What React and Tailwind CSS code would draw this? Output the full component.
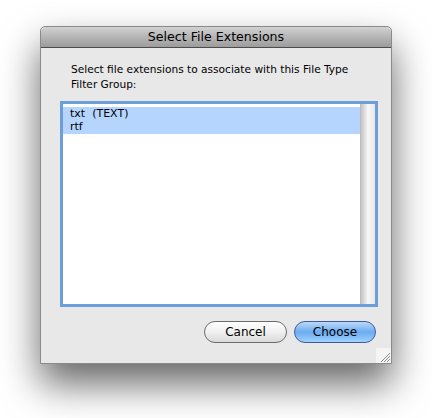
import React from "react";

export default function App() {
  const font = { fontFamily: '"Lucida Grande", "DejaVu Sans", sans-serif' };
  return (
    <div className="w-[432px] h-[418px] bg-white pl-[40px] pt-[26px]" style={font}>
      <div className="relative w-[352px] h-[338px] bg-[#e8e8e8] border border-[#8a8a8a] rounded-t-[5px] shadow-[0_20px_38px_rgba(0,0,0,0.6)] flex flex-col">
        <div className="h-[21px] rounded-t-[5px] bg-gradient-to-b from-[#d2d2d2] via-[#b5b5b5] to-[#9c9c9c] border-b border-[#4c4c4c] flex items-center justify-center text-[12.6px] text-black">
          Select File Extensions
        </div>
        <div className="pl-[30px] pt-[14px] pr-[20px] text-[10.6px] leading-[15px] text-black">
          Select file extensions to associate with this File Type Filter Group:
        </div>
        <div className="ml-[19px] mt-[9px] w-[318px] h-[206px] border-[3px] border-[#6a9fd9] bg-white flex">
          <div className="flex-1 pt-[3px] text-[11px] leading-[13px] text-black">
            <div className="bg-[#b5d5ff] pl-[7px]">txt&nbsp;&nbsp;(TEXT)</div>
            <div className="bg-[#b5d5ff] pl-[7px] h-[14px]">rtf</div>
          </div>
          <div className="w-[15px] bg-gradient-to-r from-[#c4c4c4] via-[#f7f7f7] to-[#e8e8e8] border-l border-[#bdbdbd]"></div>
        </div>
        <div className="flex justify-end gap-[7px] pr-[15px] mt-[14px]">
          <button className="w-[83px] h-[22px] rounded-full border border-[#6b6b6b] bg-gradient-to-b from-[#ffffff] via-[#f0f0f0] to-[#dadada] text-[12px] text-black">
            Cancel
          </button>
          <button className="w-[82px] h-[22px] rounded-full border border-[#3c5c9e] bg-gradient-to-b from-[#bcd9f7] via-[#6aaaf0] to-[#9fd3fd] text-[12px] text-black">
            Choose
          </button>
        </div>
        <svg className="absolute right-0 bottom-0" width="15" height="15" viewBox="0 0 15 15">
          <rect x="0" y="0" width="15" height="15" fill="#f4f4f4" />
          <line x1="14" y1="5" x2="5" y2="14" stroke="#8c8c8c" strokeWidth="1" />
          <line x1="14" y1="8" x2="8" y2="14" stroke="#8c8c8c" strokeWidth="1" />
          <line x1="14" y1="11" x2="11" y2="14" stroke="#8c8c8c" strokeWidth="1" />
        </svg>
      </div>
    </div>
  );
}
